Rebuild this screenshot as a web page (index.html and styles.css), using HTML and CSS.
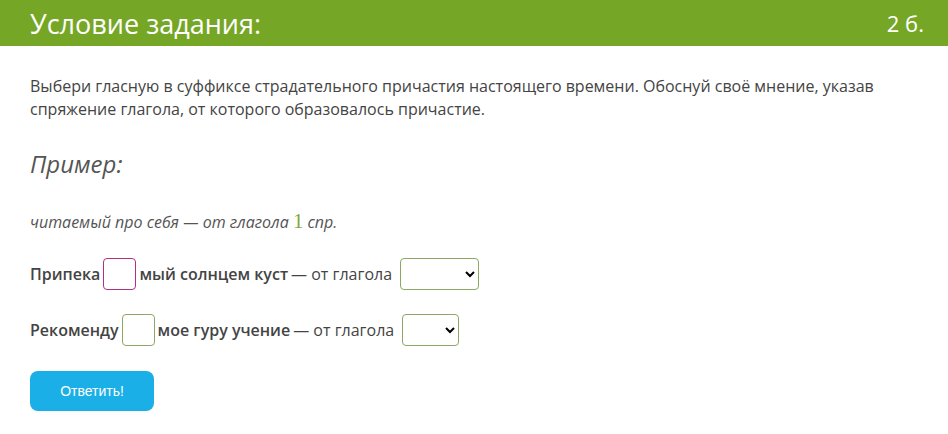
FILE: index.html
```html
<!DOCTYPE html>
<html lang="ru">
<head>
    <meta charset="UTF-8">
    <title>Условие задания</title>
    <link rel="stylesheet" href="styles.css">
</head>
<body>

<div class="header">
    <h1>Условие задания:</h1>
    <span class="points">2 б.</span>
</div>

<div class="content">
    <p class="task">Выбери гласную в суффиксе страдательного причастия настоящего времени. Обоснуй своё мнение, указав спряжение глагола, от которого образовалось причастие.</p>

    <h2>Пример:</h2>

    <p class="example">читаемый про себя — от глагола <span class="num">1</span> спр.</p>

    <div class="row">
        <b>Припека</b>
        <input type="text" class="letter focused">
        <b>мый солнцем куст</b>
        <span class="from">— от глагола</span>
        <select class="conj wide"><option></option></select>
    </div>

    <div class="row">
        <b>Рекоменду</b>
        <input type="text" class="letter">
        <b>мое гуру учение</b>
        <span class="from">— от глагола</span>
        <select class="conj"><option></option></select>
    </div>

    <button class="answer">Ответить!</button>
</div>

</body>
</html>
```

FILE: styles.css
```css
body {
    font-family: "Open Sans", sans-serif;
    margin: 0;
    padding: 0;
    background-color: #fff;
    color: #444;
}

.header {
    display: flex;
    justify-content: space-between;
    align-items: center;
    height: 46px;
    padding: 0 24px 0 30px;
    background-color: #76a626;
    color: #fff;
}

.header h1 {
    margin: 0;
    font-size: 27px;
    font-weight: normal;
}

.points {
    font-size: 22px;
}

.content {
    padding: 29px 30px 0;
}

.task {
    margin: 0;
    font-size: 16px;
    line-height: 23px;
}

h2 {
    margin: 26px 0 0;
    font-size: 24px;
    font-style: italic;
    font-weight: normal;
    color: #555;
}

.example {
    margin: 29px 0 0;
    font-size: 16px;
    font-style: italic;
    color: #555;
}

.example .num {
    font-family: "Liberation Serif", serif;
    font-style: normal;
    font-size: 21px;
    color: #7fa83a;
}

.row {
    display: flex;
    align-items: center;
    gap: 3px;
    margin-top: 24px;
    font-size: 16px;
}

.row b {
    font-weight: 600;
}

.from {
    margin-right: 5px;
}

.letter {
    width: 33px;
    height: 32px;
    box-sizing: border-box;
    border: 1px solid #8da764;
    border-radius: 4px;
    outline: none;
    padding: 0 4px;
}

.letter.focused {
    border-color: #b0317f;
}

.conj {
    width: 57px;
    height: 32px;
    border: 1px solid #8da764;
    border-radius: 4px;
    background-color: #fff;
}

.conj.wide {
    width: 79px;
}

.answer {
    margin-top: 25px;
    width: 124px;
    height: 40px;
    border: none;
    border-radius: 8px;
    background-color: #1aafe6;
    color: #fff;
    font-family: "Liberation Sans", sans-serif;
    font-size: 14px;
    cursor: pointer;
}
```
